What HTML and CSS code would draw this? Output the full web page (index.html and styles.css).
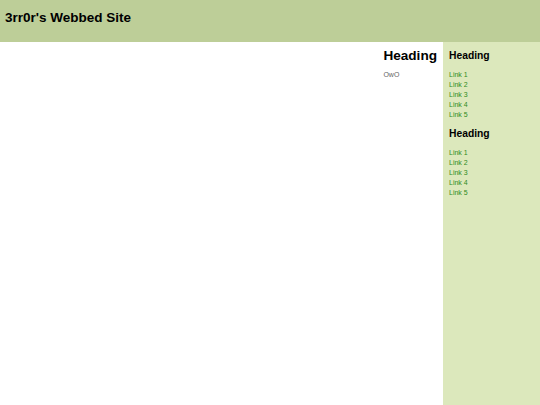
FILE: index.html
```html
<!DOCTYPE html>
<html>
<head>
<meta charset="utf-8">
<title>3rr0r's Webbed Site</title>
<link rel="stylesheet" href="styles.css">
</head>
<body>
<header class="site-header">
  <h1 class="site-title">3rr0r's Webbed Site</h1>
</header>
<div class="layout">
  <main class="main">
    <article class="post">
      <h2 class="post-heading">Heading</h2>
      <p class="post-text">OwO</p>
    </article>
  </main>
  <aside class="sidebar">
    <h3 class="side-heading">Heading</h3>
    <ul class="side-links">
      <li><a href="#">Link 1</a></li>
      <li><a href="#">Link 2</a></li>
      <li><a href="#">Link 3</a></li>
      <li><a href="#">Link 4</a></li>
      <li><a href="#">Link 5</a></li>
    </ul>
    <h3 class="side-heading">Heading</h3>
    <ul class="side-links">
      <li><a href="#">Link 1</a></li>
      <li><a href="#">Link 2</a></li>
      <li><a href="#">Link 3</a></li>
      <li><a href="#">Link 4</a></li>
      <li><a href="#">Link 5</a></li>
    </ul>
  </aside>
</div>
</body>
</html>
```
FILE: styles.css
```css
html, body {
  margin: 0;
  padding: 0;
  height: 100%;
}
body {
  font-family: "Liberation Sans", Arial, sans-serif;
  background: #ffffff;
  color: #000;
  display: flex;
  flex-direction: column;
}
.site-header {
  background: #bdce98;
  height: 42px;
  box-sizing: border-box;
  padding: 9px 0 0 5px;
  flex: none;
}
.site-title {
  margin: 0;
  font-size: 13.5px;
  line-height: 18px;
  font-weight: bold;
}
.layout {
  flex: 1;
  display: flex;
}
.main {
  flex: 1;
  display: flex;
  justify-content: flex-end;
  padding-right: 6px;
}
.post {
  padding-top: 5px;
}
.post-heading {
  margin: 0;
  font-size: 13.6px;
  line-height: 18px;
  font-weight: bold;
}
.post-text {
  margin: 5px 0 0;
  font-size: 7px;
  line-height: 10px;
  color: #666;
}
.sidebar {
  width: 97px;
  box-sizing: border-box;
  background: #dce8bc;
  padding: 7px 0 0 6px;
  flex: none;
}
.side-heading {
  margin: 0;
  font-size: 10.3px;
  line-height: 14px;
  font-weight: bold;
}
.side-links {
  list-style: none;
  margin: 7px 0 7px;
  padding: 0;
  font-size: 7px;
  line-height: 10px;
}
.side-links a {
  color: #2f8a22;
  text-decoration: none;
}
```
